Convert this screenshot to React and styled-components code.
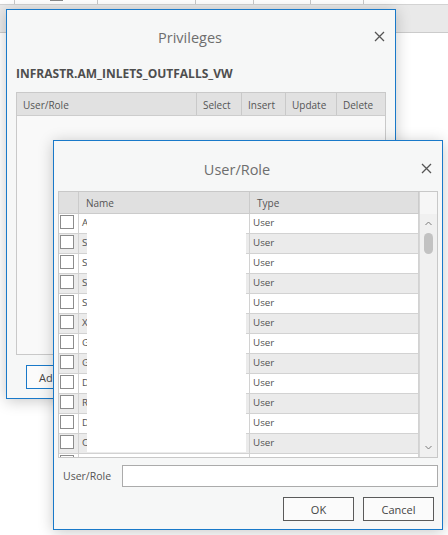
import styled, { createGlobalStyle } from 'styled-components';

const GlobalStyle = createGlobalStyle`
  body {
    margin: 0;
    background: #ffffff;
    font-family: 'Open Sans', 'Noto Sans', sans-serif;
  }
  * {
    box-sizing: border-box;
  }
`;

const Desktop = styled.div`
  width: 448px;
  height: 535px;
  position: relative;
  overflow: hidden;
  background: #ffffff;
`;

const ToolStrip = styled.div`
  height: 4px;
  display: flex;
`;

const ToolCell = styled.div`
  width: ${(props) => props.$width}px;
  height: 100%;
  border-right: 1px solid #c9c9c9;
`;

const ToolMark = styled.div`
  width: 13px;
  height: 1px;
  margin-left: 35px;
  background: #8a8a8a;
`;

const Band = styled.div`
  height: 29px;
  background: #e9e9e9;
  border-top: 1px solid #d3d3d3;
  border-bottom: 1px solid #cbcbcb;
`;

const Dialog = styled.div`
  position: absolute;
  left: ${(props) => props.$left}px;
  top: ${(props) => props.$top}px;
  width: 390px;
  height: 390px;
  display: flex;
  flex-direction: column;
  background: #f6f7f7;
  border: 1px solid #1979c9;
  box-shadow: 0 2px 14px rgba(0, 0, 0, 0.22);
`;

const TitleBar = styled.div`
  display: flex;
  align-items: flex-start;
  padding: ${(props) => props.$pad}px 4px 0 6px;
`;

const Title = styled.div`
  flex: 1;
  text-align: center;
  font-size: 14.5px;
  line-height: 20px;
  color: #6e6e6e;
`;

const Close = styled.button`
  width: 24px;
  height: 16px;
  margin: 0;
  padding: 0;
  border: none;
  background: transparent;
  display: flex;
  align-items: center;
  justify-content: center;
`;

const Subtitle = styled.div`
  margin: 17px 0 0 9px;
  font-size: 12px;
  line-height: 18px;
  font-weight: 700;
  color: #4e4e4e;
`;

const PrivTable = styled.div`
  margin: 9px 9px 0;
  height: 263px;
  border: 1px solid #c9c9c9;
  background: #f9f9f9;
`;

const PrivHeader = styled.div`
  display: grid;
  grid-template-columns: 180px 45px 44px 51px 1fr;
  height: 23px;
  background: #e1e1e1;
  border-bottom: 1px solid #cdcdcd;
`;

const HeadCell = styled.div`
  padding: 3px 0 0 6px;
  font-size: 10px;
  line-height: 18px;
  color: #555555;
  border-right: ${(props) => (props.$last ? 'none' : '1px solid #c9c9c9')};
  white-space: nowrap;
`;

const Button = styled.button`
  width: ${(props) => props.$width}px;
  height: 24px;
  margin: 0;
  padding: 0;
  font-family: 'Open Sans', sans-serif;
  font-size: 11px;
  color: #444444;
  background: #fbfbfb;
  border: 1px solid ${(props) => (props.$focused ? '#1979c9' : '#5a5a5a')};
`;

const AddButton = styled(Button)`
  margin: 10px 0 0 19px;
  text-align: left;
  padding-left: 12px;
`;

const ListGrid = styled.div`
  margin: 11px 4px 0;
  height: 267px;
  display: flex;
  border: 1px solid #c8c8c8;
  background: #ffffff;
`;

const ListArea = styled.div`
  flex: 1;
  position: relative;
  display: flex;
  flex-direction: column;
`;

const ListHeader = styled.div`
  display: grid;
  grid-template-columns: 20px 171px 1fr;
  height: 22px;
  background: #e0e0e0;
  border-bottom: 1px solid #cbcbcb;
`;

const ListHeadCell = styled.div`
  padding: 3px 0 0 7px;
  font-size: 10px;
  line-height: 17px;
  color: #555555;
  border-right: 1px solid #cbcbcb;
`;

const ListBody = styled.div`
  height: 243px;
  overflow: hidden;
`;

const Row = styled.div`
  display: grid;
  grid-template-columns: 20px 171px 1fr;
  height: 20px;
  background: ${(props) => (props.$alt ? '#ebebeb' : '#ffffff')};
  border-bottom: 1px solid #d2d2d2;
`;

const Cell = styled.div`
  padding-left: 3px;
  font-size: 9.8px;
  line-height: 18px;
  color: #515151;
  border-right: 1px solid #d2d2d2;
  white-space: nowrap;
  overflow: hidden;
`;

const CheckCell = styled.div`
  padding: 1px 0 0 1px;
  border-right: 1px solid #d2d2d2;
`;

const Check = styled.div`
  width: 14px;
  height: 14px;
  background: #ffffff;
  border: 1px solid #8c8c8c;
`;

const Redaction = styled.div`
  position: absolute;
  left: 28px;
  top: 22px;
  width: 159px;
  height: 238px;
  background: #ffffff;
`;

const ScrollTrack = styled.div`
  width: 18px;
  display: flex;
  flex-direction: column;
  align-items: center;
  background: #f0f0f0;
  border-left: 1px solid #d6d6d6;
`;

const ScrollCorner = styled.div`
  align-self: stretch;
  height: 22px;
  background: #f6f6f6;
`;

const Arrow = styled.div`
  height: 19px;
  display: flex;
  align-items: center;
  justify-content: center;
`;

const Thumb = styled.div`
  width: 9px;
  height: 21px;
  border-radius: 5px;
  background: #c2c2c2;
`;

const Spacer = styled.div`
  flex: 1;
`;

const InputRow = styled.div`
  display: flex;
  align-items: center;
  margin: 7px 4px 0;
`;

const Label = styled.label`
  width: 59px;
  margin-left: 5px;
  font-size: 10.5px;
  color: #555555;
`;

const TextBox = styled.input`
  flex: 1;
  height: 22px;
  border: 1px solid #ababab;
  background: #ffffff;
`;

const ButtonRow = styled.div`
  display: flex;
  justify-content: flex-end;
  gap: 9px;
  margin: 10px 8px 0 0;
`;

const ROWS = ['A', 'S', 'S', 'S', 'S', 'X', 'G', 'G', 'D', 'R', 'D', 'C', null];

const CloseIcon = () => (
  <svg width='11' height='11' viewBox='0 0 11 11'>
    <path d='M1 1L10 10M10 1L1 10' stroke='#555' strokeWidth='1.3' />
  </svg>
);

const Chevron = ({ down }) => (
  <svg width='7' height='5' viewBox='0 0 7 5'>
    <path
      d={down ? 'M0.5 1L3.5 4L6.5 1' : 'M0.5 4L3.5 1L6.5 4'}
      stroke='#7a7a7a'
      strokeWidth='1'
      fill='none'
    />
  </svg>
);

export default function App() {
  return (
    <Desktop>
      <GlobalStyle />
      <ToolStrip>
        <ToolCell $width={15} />
        <ToolCell $width={83}>
          <ToolMark />
        </ToolCell>
        <ToolCell $width={98} />
        <ToolCell $width={58} />
        <ToolCell $width={57} />
        <ToolCell $width={53} />
      </ToolStrip>
      <Band />

      <Dialog $left={6} $top={9}>
        <TitleBar $pad={18}>
          <Title>Privileges</Title>
          <Close>
            <CloseIcon />
          </Close>
        </TitleBar>
        <Subtitle>INFRASTR.AM_INLETS_OUTFALLS_VW</Subtitle>
        <PrivTable>
          <PrivHeader>
            <HeadCell>User/Role</HeadCell>
            <HeadCell>Select</HeadCell>
            <HeadCell>Insert</HeadCell>
            <HeadCell>Update</HeadCell>
            <HeadCell $last>Delete</HeadCell>
          </PrivHeader>
        </PrivTable>
        <AddButton $width={75} $focused>
          Add...
        </AddButton>
      </Dialog>

      <Dialog $left={53} $top={140}>
        <TitleBar $pad={19}>
          <Title>User/Role</Title>
          <Close>
            <CloseIcon />
          </Close>
        </TitleBar>
        <ListGrid>
          <ListArea>
            <ListHeader>
              <ListHeadCell />
              <ListHeadCell>Name</ListHeadCell>
              <ListHeadCell>Type</ListHeadCell>
            </ListHeader>
            <ListBody>
              {ROWS.map((letter, i) => (
                <Row key={i} $alt={i % 2 === 1}>
                  <CheckCell>
                    <Check />
                  </CheckCell>
                  <Cell>{letter}</Cell>
                  <Cell>{letter ? 'User' : ''}</Cell>
                </Row>
              ))}
            </ListBody>
            <Redaction />
          </ListArea>
          <ScrollTrack>
            <ScrollCorner />
            <Arrow>
              <Chevron />
            </Arrow>
            <Thumb />
            <Spacer />
            <Arrow>
              <Chevron down />
            </Arrow>
          </ScrollTrack>
        </ListGrid>
        <InputRow>
          <Label>User/Role</Label>
          <TextBox />
        </InputRow>
        <ButtonRow>
          <Button $width={71}>OK</Button>
          <Button $width={71}>Cancel</Button>
        </ButtonRow>
      </Dialog>
    </Desktop>
  );
}
